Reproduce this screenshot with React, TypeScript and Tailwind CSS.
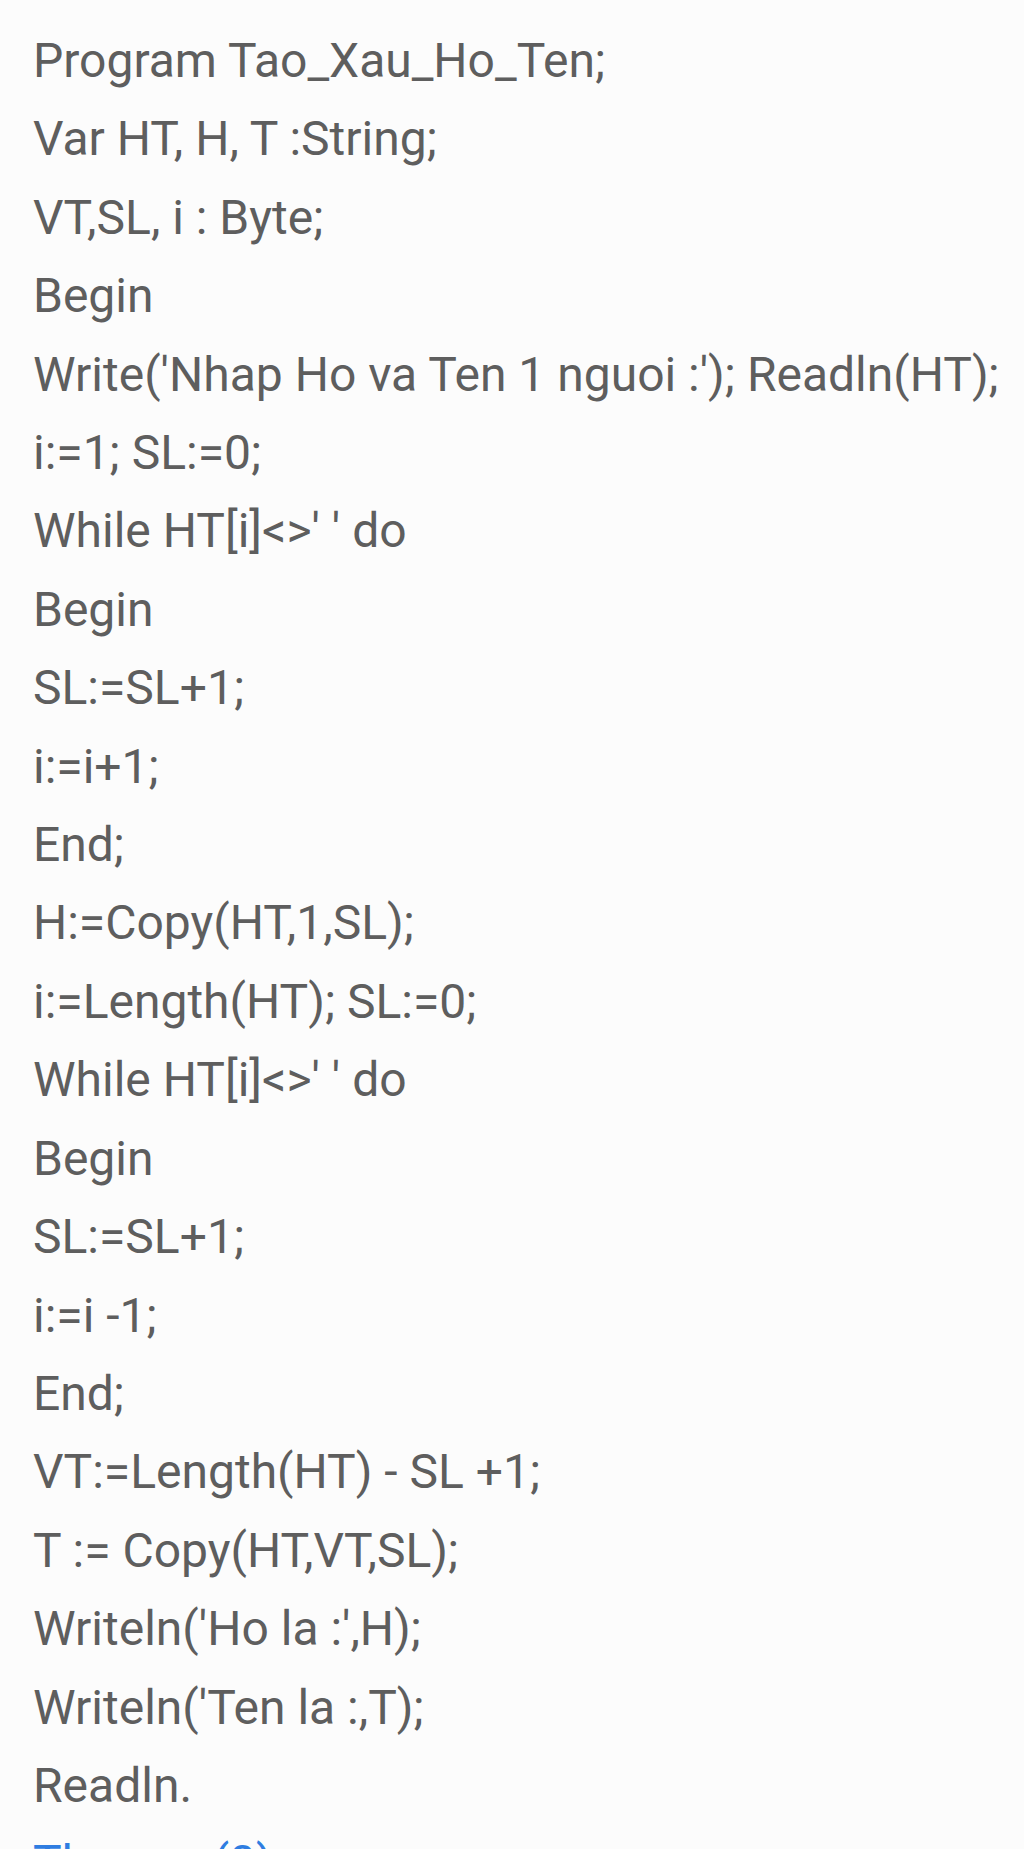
const lines = [
  "Program Tao_Xau_Ho_Ten;",
  "Var HT, H, T :String;",
  "VT,SL, i : Byte;",
  "Begin",
  "Write('Nhap Ho va Ten 1 nguoi :'); Readln(HT);",
  "i:=1; SL:=0;",
  "While HT[i]<>' ' do",
  "Begin",
  "SL:=SL+1;",
  "i:=i+1;",
  "End;",
  "H:=Copy(HT,1,SL);",
  "i:=Length(HT); SL:=0;",
  "While HT[i]<>' ' do",
  "Begin",
  "SL:=SL+1;",
  "i:=i -1;",
  "End;",
  "VT:=Length(HT) - SL +1;",
  "T := Copy(HT,VT,SL);",
  "Writeln('Ho la :',H);",
  "Writeln('Ten la :,T);",
  "Readln.",
];

export default function App() {
  return (
    <div
      className="h-[1849px] overflow-hidden bg-[#fcfcfc] px-[33px] text-[#5e5e5e]"
      style={{ fontFamily: "Roboto, 'Liberation Sans', sans-serif" }}
    >
      {/* cut-off line above */}
      <div className="h-[22px] overflow-hidden">
        <div className="-mt-[30px] text-[30px] leading-[36px] text-[#ececec]">
          Bài làm
        </div>
      </div>

      {/* code */}
      <div className="flex flex-col text-[48px] leading-[78.4px] whitespace-pre">
        {lines.map((l, i) => (
          <div key={i}>{l}</div>
        ))}
      </div>

      {/* link below, cut off by the screen edge */}
      <div className="mt-[8px] flex gap-[14px] text-[48px] leading-[60px] text-[#2f7de1]">
        <span>Thương</span>
        <span>(0)</span>
      </div>
    </div>
  );
}
